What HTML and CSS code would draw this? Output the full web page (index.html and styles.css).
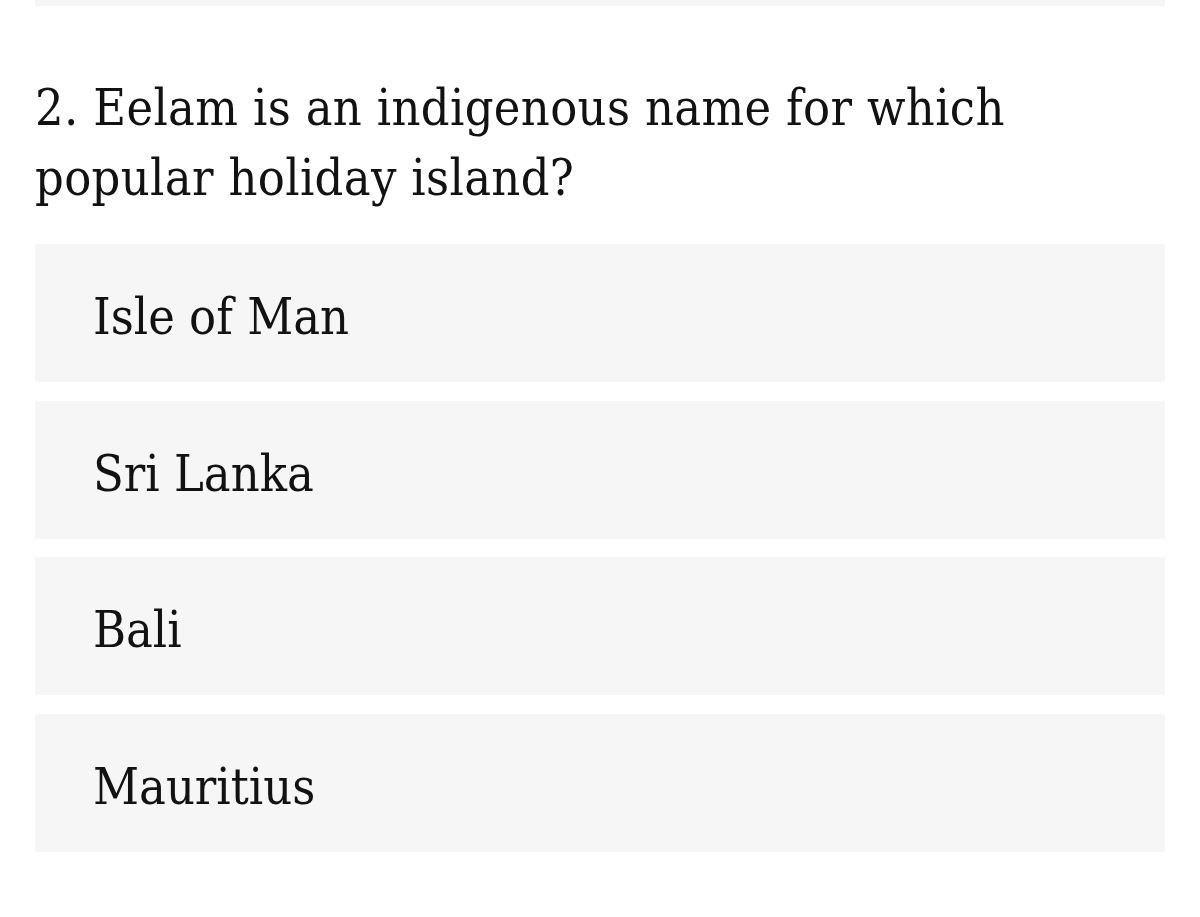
FILE: index.html
```html
<!DOCTYPE html>
<html lang="en">
<head>
<meta charset="utf-8">
<title>Quiz question</title>
<link rel="stylesheet" href="styles.css">
</head>
<body>
<div class="quiz">
  <div class="prev-edge"></div>
  <h2 class="question">2. Eelam is an indigenous name for which popular holiday island?</h2>
  <ul class="answers">
    <li class="answer">Isle of Man</li>
    <li class="answer">Sri Lanka</li>
    <li class="answer">Bali</li>
    <li class="answer">Mauritius</li>
  </ul>
</div>
</body>
</html>
```
FILE: styles.css
```css
html, body {
  margin: 0;
  padding: 0;
  background: #ffffff;
}

body {
  font-family: "DejaVu Serif Condensed", "DejaVu Serif", serif;
  font-stretch: condensed;
  color: #121212;
}

.quiz {
  width: 1130px;
  padding: 0 35px;
  display: flex;
  flex-direction: column;
}

.prev-edge {
  height: 6px;
  background: #f5f5f5;
}

.question {
  margin: 67px 0 31px;
  font-size: 50px;
  font-weight: 400;
  line-height: 70px;
  letter-spacing: 0.35px;
  max-width: 1010px;
}

.answers {
  list-style: none;
  margin: 0;
  padding: 0;
  display: flex;
  flex-direction: column;
  gap: 18.5px;
}

.answer {
  height: 138px;
  box-sizing: border-box;
  background: #f6f6f6;
  display: flex;
  align-items: center;
  padding: 8px 58px 0;
  font-size: 50px;
}
```
